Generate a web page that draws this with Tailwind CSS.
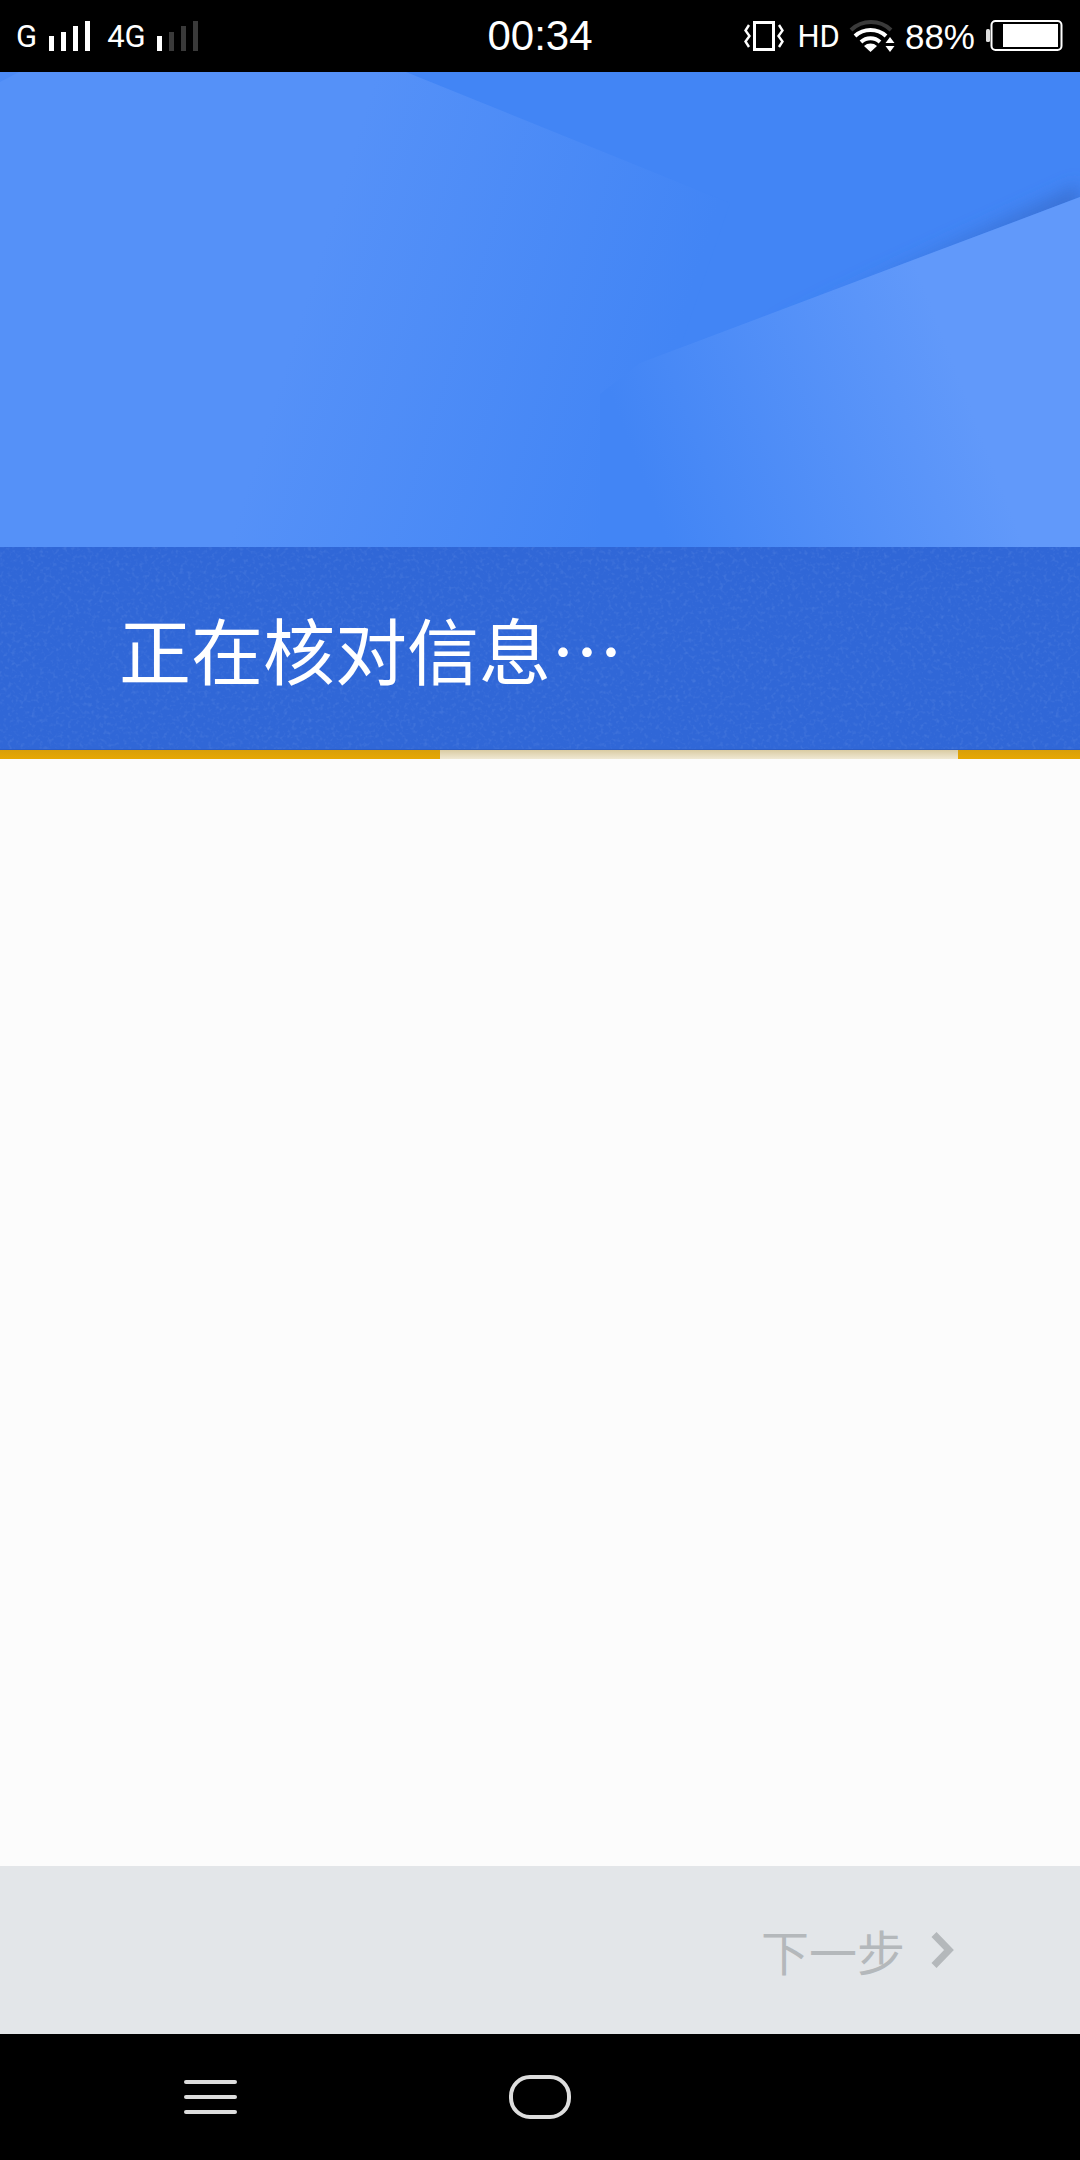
<!DOCTYPE html>
<html lang="zh-CN">
<head>
  <meta charset="UTF-8" />
  <meta name="viewport" content="width=device-width, initial-scale=1.0"/>
  <title>正在核对信息</title>
  <script src="https://cdn.jsdelivr.net/npm/@tailwindcss/browser@4"></script>
</head>
<body class="bg-black">
  <div class="w-[1080px] h-[2160px] flex flex-col overflow-hidden bg-[#fcfcfc] font-['Liberation_Sans','Noto_Sans_CJK_SC',sans-serif]">

    <!-- status bar -->
    <header class="h-[72px] shrink-0 bg-black text-white grid grid-cols-[1fr_auto_1fr] items-center">
      <div class="flex items-center pl-[16px] text-[31px] leading-none font-normal font-['Roboto',sans-serif]">
        <span>G</span>
        <svg class="ml-[12px]" width="42" height="31" viewBox="0 0 42 31" fill="#fff">
          <rect x="0" y="15" width="5" height="15"/><rect x="12" y="11" width="5" height="19"/><rect x="24" y="5" width="5" height="25"/><rect x="36" y="0" width="5" height="30"/>
        </svg>
        <span class="ml-[16px]">4G</span>
        <svg class="ml-[11px]" width="42" height="31" viewBox="0 0 42 31">
          <rect x="0" y="15" width="5" height="15" fill="#fff"/><rect x="12" y="11" width="5" height="19" fill="#3a3a3a"/><rect x="24" y="5" width="5" height="25" fill="#3a3a3a"/><rect x="36" y="0" width="5" height="30" fill="#3a3a3a"/>
        </svg>
      </div>
      <div class="text-[42px] leading-none">00:34</div>
      <div class="flex items-center justify-end pr-[17px] text-[35px] leading-none">
        <svg width="40" height="32" viewBox="0 0 40 32" fill="none" stroke="#fff">
          <rect x="10.5" y="2.5" width="19" height="27" stroke-width="3"/>
          <path d="M5 5 L1.5 10.5 L5.5 16 L1.5 21.5 L5 27" stroke-width="2.4"/>
          <path d="M35 5 L38.5 10.5 L34.5 16 L38.5 21.5 L35 27" stroke-width="2.4"/>
        </svg>
        <span class="ml-[13px] text-[31px] font-normal font-['Roboto',sans-serif]">HD</span>
        <svg class="ml-[9px]" width="46" height="34" viewBox="0 0 46 34" fill="none">
          <path d="M2 11 A29 29 0 0 1 42 11" stroke="#3a3a3a" stroke-width="4"/>
          <path d="M6 17 A23 23 0 0 1 37 17" stroke="#fff" stroke-width="4"/>
          <path d="M12 23 A14 14 0 0 1 31 23" stroke="#fff" stroke-width="4"/>
          <path d="M15 27 L21.5 33 L28 27 A10 10 0 0 0 15 27 Z" fill="#fff"/>
          <path d="M41 18 L45.5 24 L36.5 24 Z M36.5 27 L45.5 27 L41 33 Z" fill="#fff"/>
        </svg>
        <span class="ml-[10px]">88%</span>
        <svg class="ml-[11px]" width="77" height="32" viewBox="0 0 77 32">
          <rect x="0" y="9" width="4" height="13" rx="1.5" fill="#ddd"/>
          <rect x="5.5" y="1" width="70" height="29" rx="4" fill="none" stroke="#fff" stroke-width="2"/>
          <rect x="17" y="4" width="55" height="23" fill="#fff"/>
        </svg>
      </div>
    </header>

    <!-- hero picture -->
    <svg class="block shrink-0" width="1080" height="475" viewBox="0 0 1080 475">
      <defs>
        <linearGradient id="base" gradientUnits="userSpaceOnUse" x1="320" y1="180" x2="670" y2="290">
          <stop offset="0" stop-color="#5591f8"/>
          <stop offset="1" stop-color="#4285f5"/>
        </linearGradient>
        <linearGradient id="light" gradientUnits="userSpaceOnUse" x1="640" y1="400" x2="950" y2="280">
          <stop offset="0" stop-color="#4285f5"/>
          <stop offset="1" stop-color="#6199fa"/>
        </linearGradient>
        <linearGradient id="shade" gradientUnits="userSpaceOnUse" x1="1080" y1="0" x2="760" y2="0">
          <stop offset="0" stop-color="#3a72d6"/>
          <stop offset="1" stop-color="#3a72d6" stop-opacity="0"/>
        </linearGradient>
        <filter id="soft"><feGaussianBlur stdDeviation="8"/></filter>
        <clipPath id="topright"><polygon points="406,0 1080,0 1080,125 640,291"/></clipPath>
      </defs>
      <rect width="1080" height="475" fill="url(#base)"/>
      <polygon points="0,0 19,0 0,10" fill="#4d8bf6"/>
      <polygon points="406,0 1080,0 1080,125 680,276 730,131" fill="#4285f5"/>
      <g clip-path="url(#topright)">
        <polygon points="1080,112 1080,150 760,270 760,255" fill="url(#shade)" filter="url(#soft)"/>
      </g>
      <polygon points="1080,125 640,291 600,322 600,475 1080,475" fill="url(#light)"/>
    </svg>

    <!-- title band -->
    <div class="relative h-[203px] shrink-0 bg-[#3067d7] border-b border-[#2c5dc4] flex items-center pl-[119px] overflow-hidden">
      <svg class="absolute inset-0" width="1080" height="203">
        <filter id="grain">
          <feTurbulence type="fractalNoise" baseFrequency="0.25" numOctaves="2" seed="7"/>
          <feColorMatrix values="0 0 0 0 0.55  0 0 0 0 0.7  0 0 0 0 1  1.6 0 0 0 -0.8"/>
        </filter>
        <rect width="1080" height="203" filter="url(#grain)" opacity="0.18"/>
      </svg>
      <span class="relative text-white text-[72px] leading-none font-['Noto_Sans_CJK_SC',sans-serif]">正在核对信息…</span>
    </div>

    <!-- progress -->
    <div class="h-[9px] shrink-0 flex">
      <div class="w-[440px] bg-gradient-to-b from-[#d99f0a] to-[#e6a803]"></div>
      <div class="flex-1 bg-gradient-to-b from-[#d9cba3] to-[#f0e8d3]"></div>
      <div class="w-[122px] bg-gradient-to-b from-[#d99f0a] to-[#e6a803]"></div>
    </div>

    <main class="flex-1 bg-[#fcfcfc]"></main>

    <!-- next step -->
    <div class="h-[168px] shrink-0 bg-[#e3e6e9] flex items-center justify-end pr-[125px]">
      <span class="text-[48px] leading-none text-[#b4b8bb] font-['Noto_Sans_CJK_SC',sans-serif]">下一步</span>
      <svg class="ml-[26px]" width="24" height="36" viewBox="0 0 24 36" fill="none" stroke="#b4b8bb" stroke-width="7">
        <path d="M3 2.5 L18 18 L3 33.5"/>
      </svg>
    </div>

    <!-- nav bar -->
    <nav class="h-[126px] shrink-0 bg-black flex items-center pl-[184px]">
      <div class="w-[53px] flex flex-col gap-[11px]">
        <div class="h-[4px] rounded-full bg-[#ddd]"></div>
        <div class="h-[4px] rounded-full bg-[#ddd]"></div>
        <div class="h-[4px] rounded-full bg-[#ddd]"></div>
      </div>
      <div class="ml-[272px] w-[62px] h-[44px] rounded-[21px] border-[4px] border-[#ddd]"></div>
    </nav>
  </div>
</body>
</html>
